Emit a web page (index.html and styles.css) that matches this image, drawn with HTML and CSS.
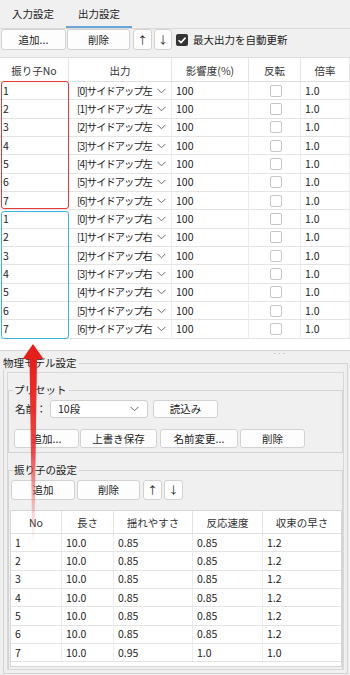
FILE: index.html
```html
<!DOCTYPE html>
<html lang="ja">
<head>
<meta charset="utf-8">
<title>出力設定</title>
<link rel="stylesheet" href="styles.css">
</head>
<body>
<div class="tabs">
  <div class="tab">入力設定</div>
  <div class="tab active">出力設定</div>
</div>
<div class="toolbar">
  <div class="btn w65">追加...</div>
  <div class="btn w63 g1">削除</div>
  <div class="btn w19 g3">↑</div>
  <div class="btn w18 g2">↓</div>
  <label class="chk">
    <svg width="12" height="12" viewBox="0 0 12 12"><rect x="0" y="0" width="12" height="12" rx="2" fill="#333"/><path d="M2.6 6.2 L5 8.6 L9.6 3.6" fill="none" stroke="#fff" stroke-width="1.6"/></svg>
    <span>最大出力を自動更新</span>
  </label>
</div>

<div class="grid">
  <div class="ghead">
    <div class="hc">振り子No</div><div class="hc">出力</div><div class="hc">影響度(%)</div><div class="hc">反転</div><div class="hc">倍率</div>
  </div>
  <div class="grow"><div class="c">1</div><div class="c sel"><span>[0]サイドアップ左</span><svg class="chev" width="9" height="6" viewBox="0 0 9 6"><polyline points="0.5,0.8 4.5,4.8 8.5,0.8" fill="none" stroke="#6a6a6a" stroke-width="1"/></svg></div><div class="c">100</div><div class="c cb"><span class="box"></span></div><div class="c">1.0</div></div>
  <div class="grow"><div class="c">2</div><div class="c sel"><span>[1]サイドアップ左</span><svg class="chev" width="9" height="6" viewBox="0 0 9 6"><polyline points="0.5,0.8 4.5,4.8 8.5,0.8" fill="none" stroke="#6a6a6a" stroke-width="1"/></svg></div><div class="c">100</div><div class="c cb"><span class="box"></span></div><div class="c">1.0</div></div>
  <div class="grow"><div class="c">3</div><div class="c sel"><span>[2]サイドアップ左</span><svg class="chev" width="9" height="6" viewBox="0 0 9 6"><polyline points="0.5,0.8 4.5,4.8 8.5,0.8" fill="none" stroke="#6a6a6a" stroke-width="1"/></svg></div><div class="c">100</div><div class="c cb"><span class="box"></span></div><div class="c">1.0</div></div>
  <div class="grow"><div class="c">4</div><div class="c sel"><span>[3]サイドアップ左</span><svg class="chev" width="9" height="6" viewBox="0 0 9 6"><polyline points="0.5,0.8 4.5,4.8 8.5,0.8" fill="none" stroke="#6a6a6a" stroke-width="1"/></svg></div><div class="c">100</div><div class="c cb"><span class="box"></span></div><div class="c">1.0</div></div>
  <div class="grow"><div class="c">5</div><div class="c sel"><span>[4]サイドアップ左</span><svg class="chev" width="9" height="6" viewBox="0 0 9 6"><polyline points="0.5,0.8 4.5,4.8 8.5,0.8" fill="none" stroke="#6a6a6a" stroke-width="1"/></svg></div><div class="c">100</div><div class="c cb"><span class="box"></span></div><div class="c">1.0</div></div>
  <div class="grow"><div class="c">6</div><div class="c sel"><span>[5]サイドアップ左</span><svg class="chev" width="9" height="6" viewBox="0 0 9 6"><polyline points="0.5,0.8 4.5,4.8 8.5,0.8" fill="none" stroke="#6a6a6a" stroke-width="1"/></svg></div><div class="c">100</div><div class="c cb"><span class="box"></span></div><div class="c">1.0</div></div>
  <div class="grow"><div class="c">7</div><div class="c sel"><span>[6]サイドアップ左</span><svg class="chev" width="9" height="6" viewBox="0 0 9 6"><polyline points="0.5,0.8 4.5,4.8 8.5,0.8" fill="none" stroke="#6a6a6a" stroke-width="1"/></svg></div><div class="c">100</div><div class="c cb"><span class="box"></span></div><div class="c">1.0</div></div>
  <div class="grow"><div class="c">1</div><div class="c sel"><span>[0]サイドアップ右</span><svg class="chev" width="9" height="6" viewBox="0 0 9 6"><polyline points="0.5,0.8 4.5,4.8 8.5,0.8" fill="none" stroke="#6a6a6a" stroke-width="1"/></svg></div><div class="c">100</div><div class="c cb"><span class="box"></span></div><div class="c">1.0</div></div>
  <div class="grow"><div class="c">2</div><div class="c sel"><span>[1]サイドアップ右</span><svg class="chev" width="9" height="6" viewBox="0 0 9 6"><polyline points="0.5,0.8 4.5,4.8 8.5,0.8" fill="none" stroke="#6a6a6a" stroke-width="1"/></svg></div><div class="c">100</div><div class="c cb"><span class="box"></span></div><div class="c">1.0</div></div>
  <div class="grow"><div class="c">3</div><div class="c sel"><span>[2]サイドアップ右</span><svg class="chev" width="9" height="6" viewBox="0 0 9 6"><polyline points="0.5,0.8 4.5,4.8 8.5,0.8" fill="none" stroke="#6a6a6a" stroke-width="1"/></svg></div><div class="c">100</div><div class="c cb"><span class="box"></span></div><div class="c">1.0</div></div>
  <div class="grow"><div class="c">4</div><div class="c sel"><span>[3]サイドアップ右</span><svg class="chev" width="9" height="6" viewBox="0 0 9 6"><polyline points="0.5,0.8 4.5,4.8 8.5,0.8" fill="none" stroke="#6a6a6a" stroke-width="1"/></svg></div><div class="c">100</div><div class="c cb"><span class="box"></span></div><div class="c">1.0</div></div>
  <div class="grow"><div class="c">5</div><div class="c sel"><span>[4]サイドアップ右</span><svg class="chev" width="9" height="6" viewBox="0 0 9 6"><polyline points="0.5,0.8 4.5,4.8 8.5,0.8" fill="none" stroke="#6a6a6a" stroke-width="1"/></svg></div><div class="c">100</div><div class="c cb"><span class="box"></span></div><div class="c">1.0</div></div>
  <div class="grow"><div class="c">6</div><div class="c sel"><span>[5]サイドアップ右</span><svg class="chev" width="9" height="6" viewBox="0 0 9 6"><polyline points="0.5,0.8 4.5,4.8 8.5,0.8" fill="none" stroke="#6a6a6a" stroke-width="1"/></svg></div><div class="c">100</div><div class="c cb"><span class="box"></span></div><div class="c">1.0</div></div>
  <div class="grow"><div class="c">7</div><div class="c sel"><span>[6]サイドアップ右</span><svg class="chev" width="9" height="6" viewBox="0 0 9 6"><polyline points="0.5,0.8 4.5,4.8 8.5,0.8" fill="none" stroke="#6a6a6a" stroke-width="1"/></svg></div><div class="c">100</div><div class="c cb"><span class="box"></span></div><div class="c">1.0</div></div>
</div>
<div class="hl hl-red"></div>
<div class="hl hl-blue"></div>

<div class="splitter"><span>···</span></div>

<fieldset class="group outer">
  <legend>物理モデル設定</legend>
  <div class="panel">
    <fieldset class="group preset">
      <legend>プリセット</legend>
      <div class="prow">
        <span class="lbl">名前：</span>
        <div class="combo"><span>10段</span><svg width="9" height="6" viewBox="0 0 9 6"><polyline points="0.5,0.8 4.5,4.8 8.5,0.8" fill="none" stroke="#6a6a6a" stroke-width="1"/></svg></div>
        <div class="btn h18 w65 g5">読込み</div>
      </div>
      <div class="prow2">
        <div class="btn h19 w65">追加...</div>
        <div class="btn h19 w77 g1">上書き保存</div>
        <div class="btn h19 w78 g3">名前変更...</div>
        <div class="btn h19 w65 g2">削除</div>
      </div>
    </fieldset>
    <fieldset class="group pend">
      <legend>振り子の設定</legend>
      <div class="brow">
        <div class="btn h20 w64">追加</div>
        <div class="btn h20 w63 g2">削除</div>
        <div class="btn h20 w19 g3">↑</div>
        <div class="btn h20 w19 g2">↓</div>
      </div>
      <div class="ptable">
        <div class="pthead"><div class="hc">No</div><div class="hc">長さ</div><div class="hc">揺れやすさ</div><div class="hc">反応速度</div><div class="hc">収束の早さ</div></div>
        <div class="ptrow"><div class="c">1</div><div class="c">10.0</div><div class="c">0.85</div><div class="c">0.85</div><div class="c">1.2</div></div>
        <div class="ptrow"><div class="c">2</div><div class="c">10.0</div><div class="c">0.85</div><div class="c">0.85</div><div class="c">1.2</div></div>
        <div class="ptrow"><div class="c">3</div><div class="c">10.0</div><div class="c">0.85</div><div class="c">0.85</div><div class="c">1.2</div></div>
        <div class="ptrow"><div class="c">4</div><div class="c">10.0</div><div class="c">0.85</div><div class="c">0.85</div><div class="c">1.2</div></div>
        <div class="ptrow"><div class="c">5</div><div class="c">10.0</div><div class="c">0.85</div><div class="c">0.85</div><div class="c">1.2</div></div>
        <div class="ptrow"><div class="c">6</div><div class="c">10.0</div><div class="c">0.85</div><div class="c">0.85</div><div class="c">1.2</div></div>
        <div class="ptrow"><div class="c">7</div><div class="c">10.0</div><div class="c">0.95</div><div class="c">1.0</div><div class="c">1.0</div></div>
      </div>
    </fieldset>
  </div>
</fieldset>

<svg class="arrow" width="60" height="560" viewBox="0 0 60 560">
  <defs>
    <linearGradient id="ag" x1="0" y1="0" x2="0" y2="1">
      <stop offset="0" stop-color="#e5201b"/>
      <stop offset="0.5" stop-color="#ea3434" stop-opacity="0.9"/>
      <stop offset="1" stop-color="#f28080" stop-opacity="0"/>
    </linearGradient>
  </defs>
  <polygon points="33,344 22.5,359 43.5,359" fill="#e5201b"/>
  <polygon points="29.5,358.5 37,358.5 34.3,545 32.3,545" fill="url(#ag)"/>
</svg>
</body>
</html>
```
FILE: styles.css
```css
* { box-sizing: border-box; }
html, body { margin: 0; padding: 0; }
body {
  width: 350px;
  height: 675px;
  overflow: hidden;
  position: relative;
  background: #f0f0f0;
  color: #1c1c1c;
  font-family: "Noto Sans CJK JP", "Noto Sans", sans-serif;
  font-size: 10.5px;
  line-height: 14px;
}

/* tabs */
.tabs { display: flex; height: 29px; border-bottom: 1px solid #dadada; }
.tab { width: 66px; height: 28px; padding-left: 12px; line-height: 28px; color: #222; }
.tab.active { border-bottom: 2px solid #6aa6dc; line-height: 28px; }

/* toolbar */
.toolbar { display: flex; align-items: center; height: 21px; margin-top: 0; padding-left: 1px; }
.btn {
  height: 21px;
  display: flex; align-items: center; justify-content: center;
  background: #fdfdfd;
  border: 1px solid #d2d2d2;
  border-radius: 3px;
  color: #222;
  flex: none;
}
.h18 { height: 18px; }
.h19 { height: 19px; }
.h20 { height: 20px; }
.w18 { width: 18px; } .w19 { width: 19px; }
.w63 { width: 63px; } .w64 { width: 64px; } .w65 { width: 65px; }
.w77 { width: 77px; } .w78 { width: 78px; }
.g1 { margin-left: 1px; } .g2 { margin-left: 2px; } .g3 { margin-left: 3px; } .g5 { margin-left: 5px; }
.chk { display: flex; align-items: center; margin-left: 4px; }
.chk svg { display: block; }
.chk span { margin-left: 5px; }

/* output grid */
.grid {
  margin-top: 7px;
  height: 294px;
  background: #fff;
  border-top: 1px solid #dcdcdc;
  border-bottom: 1px solid #d6d6d6;
  overflow: hidden;
}
.ghead, .grow { display: grid; grid-template-columns: 69px 103px 77px 52px 1fr; }
.ghead { height: 24px; }
.hc {
  display: flex; align-items: center; justify-content: center;
  border-right: 1px solid #e4e4e4;
  border-bottom: 1px solid #e0e0e0;
  padding-top: 2px;
  color: #333;
}
.grow { height: 18.33px; }
.c {
  display: flex; align-items: center;
  padding-left: 3px;
  border-right: 1px solid #ececec;
  border-bottom: 1px solid #e3e3e3;
  white-space: nowrap;
  overflow: hidden;
}
.grow .c:nth-child(2) { padding-left: 8px; }
.grow .c:nth-child(3), .grow .c:nth-child(5) { padding-left: 4px; }
.sel { justify-content: space-between; padding-right: 5px; }
.sel span { font-size: 10.2px; letter-spacing: -0.9px; }
.chev { display: block; flex: none; }
.cb { justify-content: center; padding-left: 3px; }
.box { width: 12px; height: 12px; border: 1px solid #c6c6c6; border-radius: 2px; background: #fff; }

/* highlight annotations */
.hl { position: absolute; left: 1px; width: 68px; height: 128px; border-radius: 3px; border: 1.5px solid; pointer-events: none; }
.hl-red { top: 81px; border-color: #e53a3a; }
.hl-blue { top: 211px; border-color: #3db4e4; }

/* splitter */
.splitter { height: 5px; display: flex; justify-content: flex-end; padding-right: 64px; }
.splitter span { font-size: 8px; line-height: 4px; color: #a8a8a8; letter-spacing: 0; }

/* group boxes */
.group { border: 1px solid #d3d3d3; margin: 0; min-width: 0; }
.group legend { padding: 0 2px 0 0; line-height: 14px; color: #222; }
.outer { margin: 0 2px 0 3px; padding: 2px 3px 3px 3px; }
.outer > legend { margin-left: -4px; }
.panel { height: 298px; border: 1px solid #d8d8d8; overflow: hidden; }
.preset { margin-top: 10px; padding: 3px 5px 4px 5px; }
.preset > legend, .pend > legend { margin-left: -1px; padding: 0 2px 0 1px; }
.prow { display: flex; align-items: center; height: 18px; padding-left: 1px; }
.lbl { width: 35px; }
.combo {
  width: 98px; height: 18px;
  display: flex; align-items: center; justify-content: space-between;
  padding: 0 8px 0 7px;
  background: #fff; border: 1px solid #cfcfcf; border-radius: 3px;
}
.combo svg { display: block; }
.prow2 { display: flex; margin-top: 11px; }

.pend { margin-top: 10px; padding: 3px 1px 2px 2px; }
.pend > legend { margin-left: 2px; }
.brow { display: flex; }
.ptable {
  margin-top: 10px; margin-left: -1px;
  width: 332px; height: 157px;
  background: #fff;
  border: 1px solid #d6d6d6;
}
.pthead, .ptrow { display: grid; grid-template-columns: 51px 52px 79px 70px 1fr; }
.pthead { height: 23px; }
.pthead .hc:last-child, .ptrow .c:last-child { border-right: none; }
.ptrow { height: 18.33px; }
.ptrow .c { padding-left: 4px; }

/* arrow annotation */
.arrow { position: absolute; left: 0; top: 0; pointer-events: none; }
```
